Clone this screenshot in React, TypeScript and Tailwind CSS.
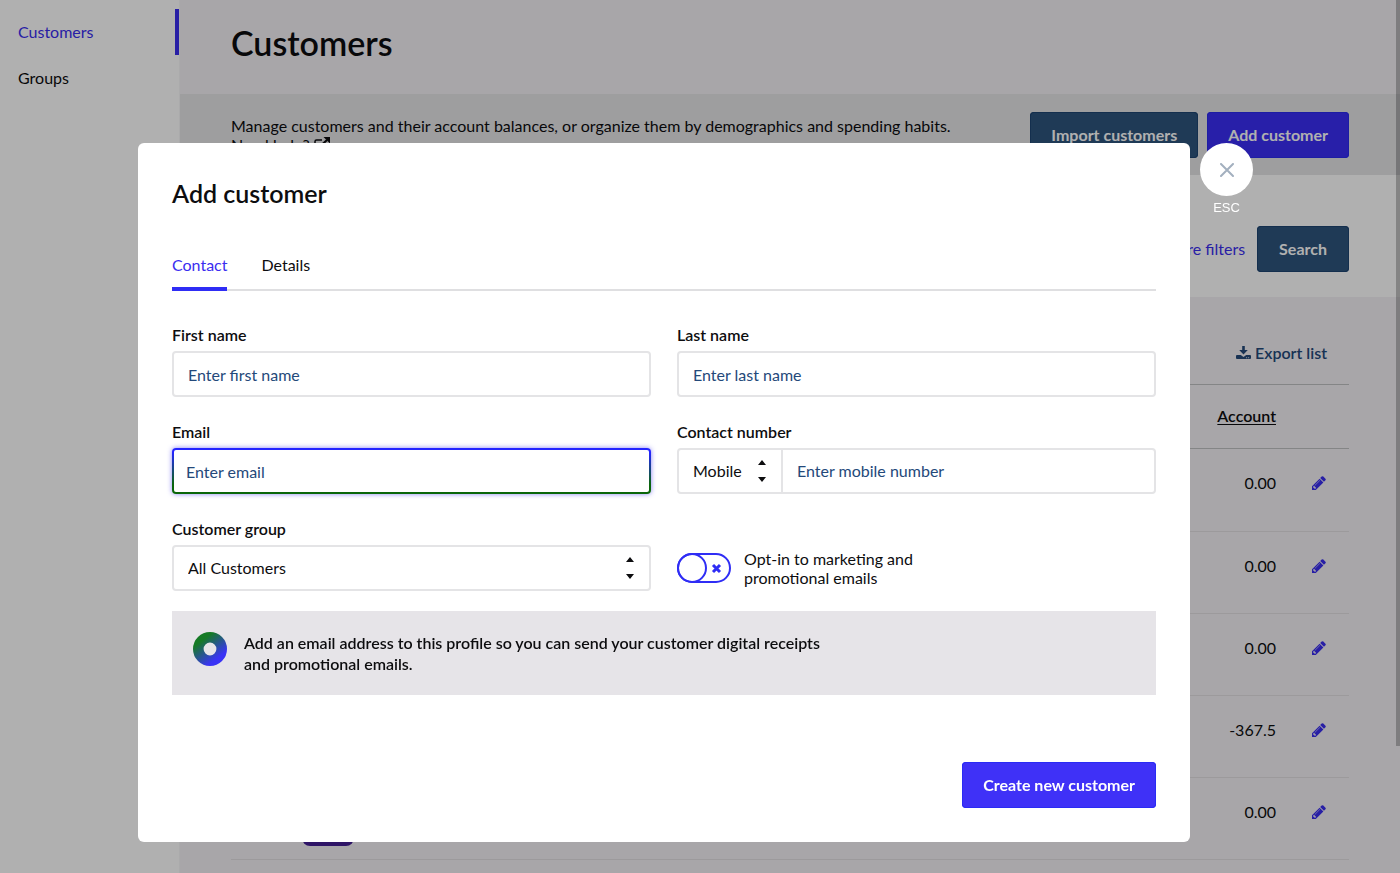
import { useState } from 'react';
import type { ReactNode } from 'react';

const accounts = [
  { id: 1, balance: '0.00', badge: false },
  { id: 2, balance: '0.00', badge: false },
  { id: 3, balance: '0.00', badge: false },
  { id: 4, balance: '-367.5', badge: false },
  { id: 5, balance: '0.00', badge: true },
];

function PencilIcon() {
  return (
    <svg className="size-[14px]" viewBox="0 0 1536 1536" fill="currentColor" aria-hidden="true">
      <path d="M363 1408l91-91-235-235-91 91v107h128v128h107zM886 480q0-22-22-22-10 0-17 7l-542 542q-7 7-7 17 0 22 22 22 10 0 17-7l542-542q7-7 7-17zM832 288l416 416-832 832H0v-416zM1515 384q0 53-37 90l-166 166-416-416 165-165q36-38 90-38 53 0 91 38l235 234q37 39 37 91z" />
    </svg>
  );
}

function DownloadIcon() {
  return (
    <svg className="w-[15px] h-[14px]" viewBox="0 0 15 14" fill="currentColor" aria-hidden="true">
      <path d="M6.200 0h2.600v4h3L7.500 8.600 3.200 4h3z" />
      <path fillRule="evenodd" d="M1 9h3.800l2.700 1.900L10.200 9H14q1 0 1 1v2q0 1-1 1H1q-1 0-1-1v-2q0-1 1-1zm9.200 2.300v.9h.9v-.9zm2 0v.9h.9v-.9z" />
    </svg>
  );
}

function ExternalIcon() {
  return (
    <svg className="inline w-4 h-4 align-[-2px]" viewBox="0 0 16 16" fill="none" stroke="currentColor" aria-hidden="true">
      <path d="M8 3H2.5Q1 3 1 4.500v8Q1 14 2.500 14h8q1.500 0 1.500-1.500V9" strokeWidth="1.500" />
      <path d="M6 9.500 13 3" strokeWidth="2.200" />
      <path d="M9.500 0H16v6.500z" fill="currentColor" stroke="none" />
    </svg>
  );
}

// up and down carets shown on the right of every select
function Carets() {
  return (
    <svg className="w-2 h-[22px] pointer-events-none" viewBox="0 0 8 22" fill="#0d0d0f" aria-hidden="true">
      <path d="M0 5 4 0l4 5zM0 17h8l-4 5z" />
    </svg>
  );
}

function Field({ id, label, children }: { id: string; label: string; children: ReactNode }) {
  return (
    <div>
      <label htmlFor={id} className="block mb-[6px] font-semibold leading-5">{label}</label>
      {children}
    </div>
  );
}

function CustomersPage() {
  return (
    <div className="flex min-h-screen bg-[#f3f1f5]">
      <nav className="w-[180px] shrink-0 pt-[9px] bg-white border-r border-[#f7f6f8]">
        <a href="#customers" className="flex items-center h-[46px] pl-[18px] border-r-4 border-[#3a2df0] text-[#3a2df0]">Customers</a>
        <a href="#groups" className="flex items-center h-[46px] pl-[18px]">Groups</a>
      </nav>

      <main className="flex-1 min-w-0">
        <header className="px-[51px] pt-[21px] pb-[29px]">
          <h1 className="text-[34px] leading-[44px] font-semibold">Customers</h1>
        </header>

        <section className="flex justify-between px-[51px] pt-[18px] pb-[17px] bg-[#e5e5e7]">
          <p className="pt-1 leading-[19px]">
            Manage customers and their account balances, or organize them by demographics and spending habits.
            <br />
            <a href="#help">Need help? <ExternalIcon /></a>
          </p>
          <div className="flex shrink-0 gap-[9px]">
            <button className="h-[46px] px-[21px] rounded bg-[#2e547d] ring-1 ring-inset ring-[#1d4471] text-white font-bold">Import customers</button>
            <button className="h-[46px] px-[21px] rounded bg-[#3a2df5] ring-1 ring-inset ring-[#2a2bee] text-white font-bold">Add customer</button>
          </div>
        </section>

        <section className="flex justify-end items-center gap-3 px-[51px] pt-[51px] pb-[25px] bg-white">
          <a href="#filters" className="text-[#3a2df0]">More filters</a>
          <button className="h-[46px] px-[22px] rounded bg-[#2e547d] ring-1 ring-inset ring-[#1d4471] text-white font-bold">Search</button>
        </section>

        <section className="px-[51px]">
          <div className="flex justify-end pt-[46px] pb-[21px] pr-[22px] border-b border-[#bfc1c3]">
            <button className="flex items-center gap-1 font-semibold leading-5 text-[#24497a]">
              <DownloadIcon />
              Export list
            </button>
          </div>
          <table className="w-full border-collapse">
            <thead>
              <tr className="h-[63px] border-b border-[#bfc1c3]">
                <td />
                <th scope="col" className="w-[90px] text-right font-semibold underline underline-offset-2">Account</th>
                <td className="w-[73px]" />
              </tr>
            </thead>
            <tbody>
              {accounts.map((row) => (
                <tr key={row.id} className="h-[82px] first:h-[83px] align-top border-b border-[#e2e0e3]">
                  <td className="pt-9 pl-[71px]">
                    {row.badge && <span className="block w-[52px] h-8 rounded-lg bg-[#431e94]" />}
                  </td>
                  <td className="pt-6 text-right leading-5">{row.balance}</td>
                  <td className="pt-[27px] pl-9 text-[#3a2df0]">
                    <button aria-label="Edit customer" className="block"><PencilIcon /></button>
                  </td>
                </tr>
              ))}
            </tbody>
          </table>
        </section>
      </main>
    </div>
  );
}

function AddCustomerModal() {
  const [optIn, setOptIn] = useState(false);

  return (
    <div className="fixed inset-0 flex items-start gap-[10px] pt-[143px] pl-[138px] pr-[147px] bg-black/31">
      <div role="dialog" aria-labelledby="modal-title" className="flex-1 min-w-0 p-[34px] rounded-md bg-white">
        <h2 id="modal-title" className="text-[25px] leading-8 font-semibold">Add customer</h2>

        <div role="tablist" className="flex gap-[34px] mt-[46px] border-b-2 border-[#dfdfe1]">
          <button role="tab" aria-selected="true" className="-mb-[2px] pb-3 border-b-4 border-[#2f2df5] leading-5 text-[#3a2df0]">Contact</button>
          <button role="tab" aria-selected="false" className="-mb-[2px] pb-4 leading-5">Details</button>
        </div>

        <form onSubmit={(e) => e.preventDefault()}>
          <div className="grid grid-cols-2 gap-x-[26px] gap-y-[25px] mt-[34px]">
            <Field id="first-name" label="First name">
              <input id="first-name" type="text" placeholder="Enter first name" className="w-full h-[46px] px-[14px] border-2 border-[#e4e4e6] rounded placeholder:text-[#24497a]" />
            </Field>
            <Field id="last-name" label="Last name">
              <input id="last-name" type="text" placeholder="Enter last name" className="w-full h-[46px] px-[14px] border-2 border-[#e4e4e6] rounded placeholder:text-[#24497a]" />
            </Field>
            <Field id="email" label="Email">
              <input
                id="email"
                type="email"
                placeholder="Enter email"
                className="w-full h-[46px] px-3 border-2 border-transparent rounded outline-none shadow-[0_0_5px_rgba(58,45,240,0.6)] [background:linear-gradient(#fff,#fff)_padding-box,linear-gradient(#2424ff_10%,#0a660a_80%)_border-box] placeholder:text-[#24497a]"
              />
            </Field>
            <Field id="phone" label="Contact number">
              <div className="flex h-[46px] border-2 border-[#e4e4e6] rounded">
                <div className="grid items-center w-[104px] shrink-0 border-r-2 border-[#e4e4e6]">
                  <select aria-label="Number type" className="col-start-1 row-start-1 h-full w-full pl-[14px] appearance-none bg-transparent">
                    <option>Mobile</option>
                  </select>
                  <span className="col-start-1 row-start-1 justify-self-end mr-[15px] pointer-events-none"><Carets /></span>
                </div>
                <input id="phone" type="tel" placeholder="Enter mobile number" className="flex-1 min-w-0 px-[14px] placeholder:text-[#24497a]" />
              </div>
            </Field>
            <Field id="group" label="Customer group">
              <div className="grid items-center h-[46px] border-2 border-[#e4e4e6] rounded">
                <select id="group" className="col-start-1 row-start-1 h-full w-full pl-[14px] appearance-none bg-transparent">
                  <option>All Customers</option>
                </select>
                <span className="col-start-1 row-start-1 justify-self-end mr-[15px] pointer-events-none"><Carets /></span>
              </div>
            </Field>
            <label className="flex items-center gap-[13px] self-end h-[46px]">
              <input type="checkbox" className="sr-only peer" checked={optIn} onChange={(e) => setOptIn(e.target.checked)} />
              <svg className="w-[54px] h-[30px] shrink-0 peer-checked:rotate-180" viewBox="0 0 54 30" fill="none" stroke="#2f2df5" strokeWidth="2" aria-hidden="true">
                <rect x="1" y="1" width="52" height="28" rx="14" />
                <circle cx="15" cy="15" r="14" />
                <path d="m36 12 7 7m0-7-7 7" strokeWidth="3" />
              </svg>
              <span className="leading-[19px]">
                Opt-in to marketing and
                <br />
                promotional emails
              </span>
            </label>
          </div>

          <div className="flex gap-[17px] mt-[20px] px-[21px] py-[21px] bg-[#e6e4e8]">
            <svg className="size-[34px] shrink-0" viewBox="0 0 34 34" aria-hidden="true">
              <defs>
                <linearGradient id="ring" x1="0.2" y1="0.1" x2="0.8" y2="0.9">
                  <stop offset="0" stopColor="#157a25" />
                  <stop offset="1" stopColor="#3a33f5" />
                </linearGradient>
              </defs>
              <circle cx="17" cy="17" r="11.700" fill="none" stroke="url(#ring)" strokeWidth="10.600" />
            </svg>
            <p className="leading-[21px] font-semibold">
              Add an email address to this profile so you can send your customer digital receipts
              <br />
              and promotional emails.
            </p>
          </div>

          <div className="flex justify-end mt-[67px]">
            <button type="submit" className="h-[46px] px-[21px] rounded bg-[#3f31f7] ring-1 ring-inset ring-[#2a2bf5] text-white font-bold">Create new customer</button>
          </div>
        </form>
      </div>

      <button className="flex flex-col items-center w-[53px] shrink-0 font-['Liberation_Sans',sans-serif] text-[13px] leading-4 text-white">
        <span className="flex items-center justify-center size-[53px] mb-1 rounded-full bg-white">
          <svg className="size-[14px]" viewBox="0 0 14 14" stroke="#a3b0bf" strokeWidth="2" strokeLinecap="round" aria-hidden="true">
            <path d="m1 1 12 12M13 1 1 13" />
          </svg>
        </span>
        ESC
      </button>
    </div>
  );
}

export default function App() {
  return (
    <div className="font-[Lato,sans-serif] text-base text-[#0d0d0f]">
      <CustomersPage />
      <div className="fixed top-0 right-0 w-1 h-[746px] bg-black/25" />
      <AddCustomerModal />
    </div>
  );
}
